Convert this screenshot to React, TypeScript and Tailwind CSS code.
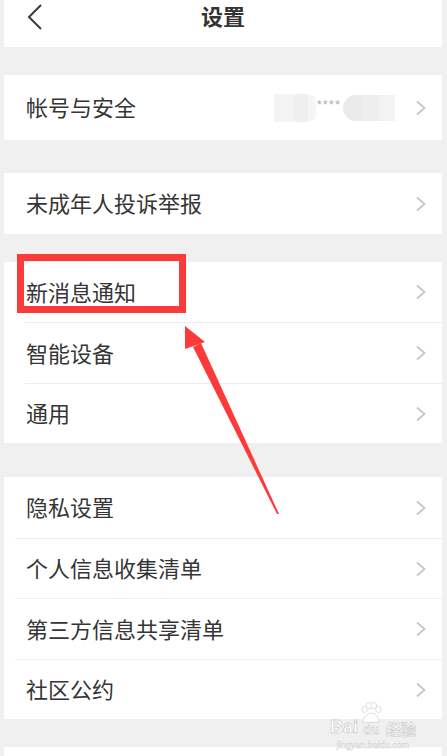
const font = 'font-["Noto_Sans_CJK_SC","Noto_Sans",sans-serif]';

const Chevron = () => (
  <svg width="12" height="16" viewBox="0 0 12 16" className="shrink-0">
    <path d="M2 1.5 L9.5 8 L2 14.5" fill="none" stroke="#c6c6c6" strokeWidth="1.8" />
  </svg>
);

const BackIcon = () => (
  <svg width="18" height="28" viewBox="0 0 18 28" className="absolute left-[22px] top-[3px]">
    <path d="M15 2 L3 14 L15 26" fill="none" stroke="#3a3a3a" strokeWidth="2" />
  </svg>
);

interface RowProps {
  label: string;
  height: string;
  children?: React.ReactNode;
}

const Row = ({ label, height, children }: RowProps) => (
  <div className={`flex items-center justify-between pl-[22px] pr-[15px] ${height}`}>
    <span className="mb-[3px] text-[22px] leading-none text-[#353535]">{label}</span>
    <div className="flex items-center">
      {children}
      <Chevron />
    </div>
  </div>
);

const Divider = ({ inset }: { inset: string }) => (
  <div className={`h-px bg-[#ededed] ${inset}`} />
);

// 帐号那一行右侧被打码的部分
const Masked = () => (
  <div className="flex items-center mr-[20px]">
    <div className="flex h-[28px] w-[42px]">
      <div className="w-[20px] bg-[#f4f4f4]" />
      <div className="w-[14px] bg-[#efefef]" />
      <div className="w-[8px] rounded-r-full bg-[#f6f6f6]" />
    </div>
    <span className="mb-[6px] ml-[1px] font-['Liberation_Sans',sans-serif] text-[13px] leading-none tracking-[1px] text-[#b0b0b0]">****</span>
    <div className="ml-[2px] flex h-[26px] w-[52px] overflow-hidden rounded-l-[13px]">
      <div className="w-[18px] bg-[#ebebeb]" />
      <div className="w-[18px] bg-[#eeeeee]" />
      <div className="w-[16px] bg-[#f3f3f3]" />
    </div>
  </div>
);

export default function App() {
  return (
    <div className={`relative h-[756px] w-[447px] overflow-hidden bg-[#f0f0f0] ${font}`}>
      <div className="ml-[4px] mr-[5px] flex flex-col">
        {/* 顶栏 */}
        <div className="relative flex h-[47px] items-start justify-center bg-white pt-[2px]">
          <BackIcon />
          <span className="text-[22px] font-bold leading-[26px] text-[#333]">设置</span>
        </div>

        <div className="h-[28px]" />
        <div className="bg-white">
          <Row label="帐号与安全" height="h-[65px]">
            <Masked />
          </Row>
        </div>

        <div className="h-[33px]" />
        <div className="bg-white">
          <Row label="未成年人投诉举报" height="h-[61px]" />
        </div>

        <div className="h-[28px]" />
        <div className="bg-white">
          <Row label="新消息通知" height="h-[60px]" />
          <Divider inset="ml-[21px]" />
          <Row label="智能设备" height="h-[60px]" />
          <Divider inset="ml-[21px]" />
          <Row label="通用" height="h-[59px]" />
        </div>

        <div className="h-[34px]" />
        <div className="bg-white">
          <Row label="隐私设置" height="h-[61px]" />
          <Divider inset="ml-[11px]" />
          <Row label="个人信息收集清单" height="h-[59px]" />
          <Divider inset="ml-[11px]" />
          <Row label="第三方信息共享清单" height="h-[60px]" />
          <Divider inset="ml-[11px]" />
          <Row label="社区公约" height="h-[59px]" />
        </div>

        <div className="h-[28px]" />
        <div className="h-[20px] bg-white" />
      </div>

      {/* 红框标注 */}
      <div className="absolute left-[17px] top-[254px] h-[59px] w-[169px] border-[7px] border-[#fd3a3a]" />

      {/* 箭头 */}
      <svg className="absolute left-0 top-0" width="447" height="756">
        <polygon points="185,326 185,349 205,342" fill="#fd3a3a" />
        <polygon points="193,347 201,343 279,514 277,514" fill="#fd3a3a" />
      </svg>

      {/* 百度经验水印 */}
      <div className="absolute left-[330px] top-[700px] flex flex-col items-center font-['Liberation_Sans',sans-serif] text-white [-webkit-text-stroke:0.8px_#d4d4d4]">
        <div className="flex h-[36px] items-end">
          <span className="text-[18px] font-bold leading-[18px]">Bai</span>
          <div className="relative mx-[1px] flex h-[34px] w-[24px] items-end justify-center">
            <svg className="absolute left-0 top-0" width="24" height="24" viewBox="0 0 26 26">
              <g fill="white" stroke="#d4d4d4" strokeWidth="0.8">
                <ellipse cx="6" cy="8" rx="3" ry="3.5" />
                <ellipse cx="11" cy="4" rx="3" ry="3.5" />
                <ellipse cx="16" cy="4" rx="3" ry="3.5" />
                <ellipse cx="21" cy="8" rx="3" ry="3.5" />
                <path d="M4 22 Q6 12 13 12 Q20 12 22 22 Z" />
              </g>
            </svg>
            <span className="relative text-[13px] font-bold leading-[13px]">du</span>
          </div>
          <span className={`ml-[2px] text-[15px] font-bold leading-[15px] ${font}`}>经验</span>
        </div>
        <span className="mt-[5px] text-[9px] leading-[9px] [-webkit-text-stroke:0.5px_#d4d4d4]">jingyan.baidu.com</span>
      </div>
    </div>
  );
}
